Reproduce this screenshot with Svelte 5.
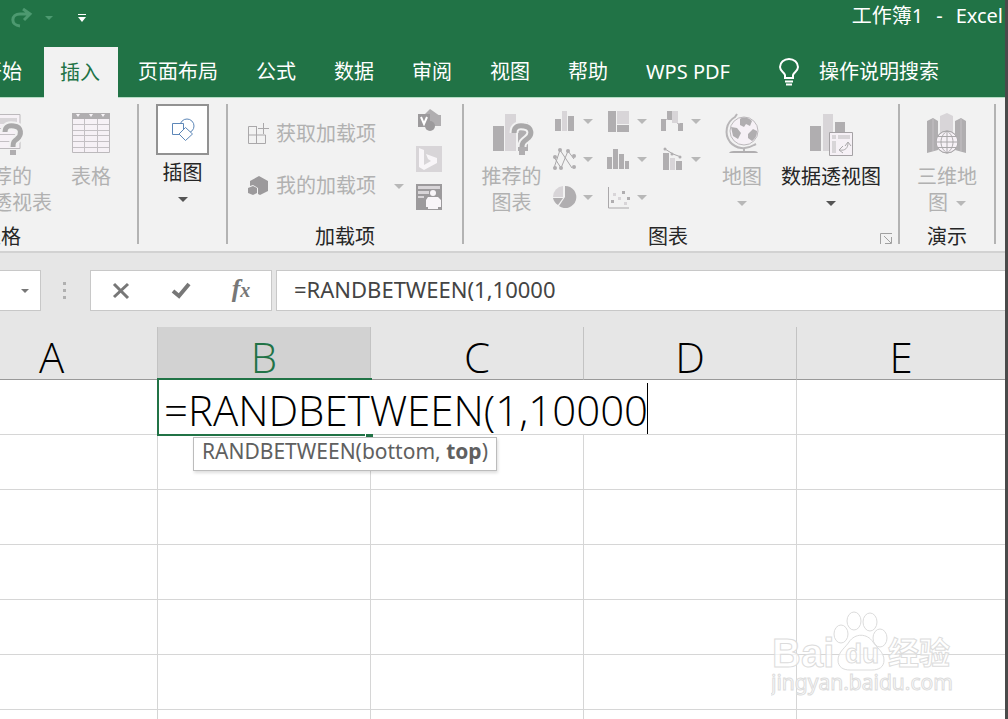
<script>
  const formula = '=RANDBETWEEN(1,10000';
  const tabs = ['开始', '插入', '页面布局', '公式', '数据', '审阅', '视图', '帮助', 'WPS PDF'];
  const columns = ['A', 'B', 'C', 'D', 'E'];
  const emptyRows = [2, 3, 4, 5, 6, 7];
  const charts = [
    ['column', '柱形图'], ['tree', '层次结构图表'], ['waterfall', '瀑布图'],
    ['line', '折线图'], ['histogram', '统计图表'], ['combo', '组合图'],
    ['pie', '饼图'], ['scatter', '散点图']
  ];
  let cellText = $state(formula);
</script>

{#snippet arrow(dark)}
  <svg class="arrow" class:dark width="10" height="5" viewBox="0 0 10 5" aria-hidden="true"><path d="M0 0h10L5 5z" /></svg>
{/snippet}

{#snippet chartIcon(kind)}
  <svg width="24" height="24" viewBox="0 0 24 24" aria-hidden="true">
    {#if kind === 'column'}
      <path class="m" d="M2 10h6v12H2zM15 7h6v15h-6z" /><path class="l" d="M9 2h5v20H9z" />
    {:else if kind === 'tree'}
      <path class="m" d="M1 2h8v21H1zM10 16h12v7H10z" /><path class="l" d="M10 2h12v13H10z" />
    {:else if kind === 'waterfall'}
      <path class="m" d="M0 10h5v12H0zM6 2h5v9H6zM17 14h5v8h-5z" /><path class="l" d="M11 2h6v12h-6z" /><path class="s" d="M5 10.500h2M16 14.500h3" />
    {:else if kind === 'line'}
      <path class="s w" d="M1 21L7 3l12 18M1 10l7 11L15 4l6 8" />
      <g class="m"><circle cx="2" cy="10" r="2" /><circle cx="2" cy="21" r="2" /><circle cx="7" cy="3" r="2" /><circle cx="8" cy="21" r="2" /><circle cx="15" cy="4" r="2" /><circle cx="21" cy="9" r="2" /><circle cx="21" cy="20" r="2" /></g>
    {:else if kind === 'histogram'}
      <path class="m" d="M0 10h5v12H0zM6 2h5v20H6zM12 7h5v15h-5zM18 14h4v8h-4z" />
    {:else if kind === 'combo'}
      <path class="m" d="M2 6h6v17H2zM15 14h6v9h-6z" /><path class="l" d="M9 11h5v12H9z" /><path class="s w" d="M4 2l8 5 8 3" />
      <g class="m"><circle cx="4" cy="2" r="1.500" /><circle cx="11" cy="7" r="1.500" /><circle cx="19" cy="10" r="1.500" /></g>
    {:else if kind === 'pie'}
      <path class="m" d="M12 1a11 11 0 1 1-6 20l6-9z" /><path class="l" d="M10 1v11H0A11 11 0 0 1 10 1z" /><path class="m" d="M0 13h10l-5 7a11 11 0 0 1-5-7z" />
    {:else}
      <path class="s w" d="M1.500 2v21H22" /><path class="m" d="M15 6h3v3h-3zM4 15h3v3H4zM20 12h3v3h-3z" /><path class="l" d="M6 8h3v3H6zM11 12h3v3h-3zM17 17h3v3h-3z" />
    {/if}
  </svg>
{/snippet}

<div class="app">
  <header>
    <div class="title">
      <button class="plain redo" aria-label="重做"><svg width="22" height="20" viewBox="0 0 22 20"><path d="M9 18C-1 17 0 6 9 6h9M12 1l7 5-6 6" /></svg></button>
      <button class="plain redo-menu" aria-label="重做选项"><svg width="8" height="4" viewBox="0 0 8 4"><path d="M0 0h8L4 4z" /></svg></button>
      <button class="plain customize" aria-label="自定义快速访问工具栏"><svg width="8" height="8" viewBox="0 0 8 8"><path d="M0 0h8v1H0zM0 3h8L4 8z" /></svg></button>
      <div class="name"><span>工作簿1</span><span>-</span><span>Excel</span></div>
    </div>
    <nav>
      {#each tabs as tab}
        <button class="tab" class:active={tab === '插入'}>{tab}</button>
      {/each}
      <button class="tab tell">
        <svg width="20" height="28" viewBox="0 0 20 28" aria-hidden="true"><path d="M6 20v-3C5 14 1 13 1 9a9 8 0 0 1 18 0c0 4-4 5-5 8v3zM6 23.500h8M7 26.500h6" /></svg>
        操作说明搜索
      </button>
    </nav>
  </header>

  <div class="ribbon">
    <section class="group tables">
      <div class="body">
        <button class="big pivot" disabled>
          <svg width="48" height="44" viewBox="0 0 48 44" aria-hidden="true">
            <path class="paper" d="M1 2.500h41v34H1z" /><path class="l" d="M20 6h19v6H20z" /><path class="s" d="M16 3v33M2 16.500h39M2 22.500h39M2 29.500h39" />
            <path class="qh" d="M27 20c0-6 5-7 9-6 8 1 8 9 3 13-3 2-4 3-4 8" /><path class="q" d="M27 20c0-6 5-7 9-6 8 1 8 9 3 13-3 2-4 3-4 8" /><path class="m" d="M32 38h6v5h-6z" />
          </svg>
          <span>推荐的</span><span>数据透视表</span>
        </button>
        <button class="big table" disabled>
          <svg width="40" height="44" viewBox="0 0 40 44" aria-hidden="true">
            <path class="paper" d="M1.500 2.500h37v38h-37z" /><path class="m" d="M1 1h38v6H1z" /><path class="white" d="M5 2h4l-2 3zM18 2h4l-2 3zM30 2h4l-2 3z" /><path class="s" d="M2 12.500h36M2 18.500h36M2 23.500h36M2 29.500h36M2 35.500h36M13.500 7v33M26.500 7v33" />
          </svg>
          <span>表格</span>
        </button>
      </div>
      <h2>表格</h2>
    </section>
    <i class="sep"></i>

    <section class="group illus">
      <button class="big illustration">
        <span class="tile"><svg width="26" height="26" viewBox="0 0 26 26" aria-hidden="true"><circle cx="17" cy="9" r="7" /><path class="face" d="M2.500 6.500h11v11h-11z" /><path class="face" d="M15.500 10.500l7 6.500-7 6.500L9 17z" /></svg></span>
        <span>插图</span>
        <span class="drop">{@render arrow(true)}</span>
      </button>
    </section>
    <i class="sep"></i>

    <section class="group addins">
      <div class="body">
        <div class="links">
          <button class="link" disabled>
            <svg width="22" height="24" viewBox="0 0 22 24" aria-hidden="true"><path class="s w" d="M10 4.500H1.500v17h17V13M1.500 13h17M9.500 4.500v17M16.500 1v11M11 6.500h11" /></svg>
            获取加载项
          </button>
          <button class="link" disabled>
            <svg width="22" height="24" viewBox="0 0 22 24" aria-hidden="true"><path class="k" d="M12 2l9 5v10l-8 4-2-1v-6l-5-3-3 1V7z" /><path class="k" d="M6 12l4 2v5l-4 2-5-2v-5z" /></svg>
            我的加载项
            {@render arrow(false)}
          </button>
        </div>
        <div class="stack">
          <button class="plain" aria-label="Visio Data Visualizer" disabled><svg width="26" height="26" viewBox="0 0 26 26"><path class="m" d="M14 1l10 7-10 8-7-8z" /><path class="m" d="M16 7h9v11h-9z" /><circle class="k" cx="14" cy="18" r="5" /><path class="k" d="M2 6h12v13H2z" /><path class="v" d="M5 9l3 7 3-7" /></svg></button>
          <button class="plain" aria-label="必应地图" disabled><svg width="26" height="26" viewBox="0 0 26 26"><path class="l" d="M0 0h26v26H0z" /><path class="white" d="M3 2l5 2v15l7-4-3-2-2-5 11 4v5L8 24l-5-3z" /></svg></button>
          <button class="plain" aria-label="人员图" disabled><svg width="26" height="26" viewBox="0 0 26 26"><path class="k" d="M0 0h26v26H0z" /><path class="l" d="M2 2h22v3H2zM2 7h11v3H2zM2 12h6v2H2z" /><g class="white"><circle cx="17" cy="9" r="3" /><path d="M12 13h10l3 3v7h-3v2H12v-2h-2v-7z" /></g></svg></button>
        </div>
      </div>
      <h2>加载项</h2>
    </section>
    <i class="sep"></i>

    <section class="group charts">
      <div class="body">
        <button class="big recommended" disabled>
          <svg width="44" height="44" viewBox="0 0 44 44" aria-hidden="true">
            <path class="m" d="M3 14h11v25H3zM28 10h10v29H28z" /><path class="l" d="M15 2h11v37H15z" />
            <path class="qh" d="M24 21c0-7 5-8 10-7 8 1 9 9 3 13-4 3-5 4-5 8" /><path class="q" d="M24 21c0-7 5-8 10-7 8 1 9 9 3 13-4 3-5 4-5 8" /><path class="m" d="M29 38h6v5h-6z" />
          </svg>
          <span>推荐的</span><span>图表</span>
        </button>
        <div class="chart-grid">
          {#each charts as [kind, label]}
            <button class="plain small" aria-label={label} disabled>{@render chartIcon(kind)}{@render arrow(false)}</button>
          {/each}
        </div>
        <button class="big map" disabled>
          <svg width="40" height="44" viewBox="0 0 40 44" aria-hidden="true">
            <circle class="paper" cx="22" cy="19" r="14" /><path class="m" d="M18 7c4-3 9-1 12 2l-2 5-4-2-2 3-4-2zM9 15l6 1 4 5-3 6-5-3zM26 22l5-5 4 2c0 5-2 8-5 10l-4-3z" /><path class="ring" d="M15 2l-2 3C4 10 2 22 8 30c6 7 16 8 24 3l2-1M22 36v4" /><path class="m" d="M7 41c1-2 4-2 7-2h16c3 0 5 0 6 2z" />
          </svg>
          <span>地图</span>
          <span class="drop">{@render arrow(false)}</span>
        </button>
        <button class="big pivot-chart">
          <svg width="44" height="44" viewBox="0 0 44 44" aria-hidden="true">
            <path class="m" d="M1 14h11v25H1zM26 10h10v12H26z" /><path class="l" d="M14 2h10v37H14z" /><path class="paper strong" d="M20.500 20.500h23v23h-23z" /><path class="l" d="M23 23h4v4h-4zM29 23h12v4H29zM23 29h4v12h-4z" /><path class="s w" d="M31 38c5 1 8-2 8-7M36 34l3-4 3 4M34 34l-4 4 4 3" />
          </svg>
          <span>数据透视图</span>
          <span class="drop">{@render arrow(true)}</span>
        </button>
      </div>
      <h2>图表</h2>
      <button class="plain launcher" aria-label="图表选项"><svg width="13" height="13" viewBox="0 0 13 13"><path d="M.5 12V1.500H12M4 4l7 7M11.500 5v6.500H5" /></svg></button>
    </section>
    <i class="sep"></i>

    <section class="group demo">
      <div class="body">
        <button class="big" disabled>
          <svg width="40" height="44" viewBox="0 0 40 44" aria-hidden="true">
            <path class="m" d="M0 9l6-3 5 3v29l-11 3zM28 9l6-3 5 3v32l-11-3z" /><path class="l" d="M13 4l7-3 6 3v34H13z" /><path class="s" d="M6 7v32M34 7v32" /><circle class="paper" cx="20" cy="30" r="11" /><path class="s w" d="M9 30h22M11 24.500h18M11 35.500h18M20 19v22M20 19c-8 5-8 17 0 22M20 19c8 5 8 17 0 22" /><circle class="s w" cx="20" cy="30" r="11" />
          </svg>
          <span>三维地</span><span class="inline">图 {@render arrow(false)}</span>
        </button>
      </div>
      <h2>演示</h2>
    </section>
    <i class="sep"></i>
  </div>

  <div class="formula-bar">
    <button class="box name-box" aria-label="名称框"><svg width="8" height="4" viewBox="0 0 8 4"><path d="M0 0h8L4 4z" /></svg></button>
    <svg class="dots" width="4" height="18" viewBox="0 0 4 18" aria-hidden="true"><path d="M0 0h3v3H0zM0 7h3v3H0zM0 14h3v3H0z" /></svg>
    <div class="box actions">
      <button class="plain" aria-label="取消"><svg width="18" height="18" viewBox="0 0 18 18"><path d="M2 2l14 14M16 2L2 15" /></svg></button>
      <button class="plain" aria-label="输入"><svg width="20" height="18" viewBox="0 0 20 18"><path class="thick" d="M2 9l6 5L18 2" /></svg></button>
      <button class="plain fx" aria-label="插入函数">f<small>x</small></button>
    </div>
    <input class="box" aria-label="编辑栏" bind:value={cellText} />
  </div>

  <main>
    <table>
      <colgroup><col class="first" /><col class="std" /><col class="std" /><col class="std" /><col /></colgroup>
      <thead>
        <tr>{#each columns as c}<th scope="col" class:current={c === 'B'}>{c}</th>{/each}</tr>
      </thead>
      <tbody>
        <tr>
          <td></td>
          <td class="editing">
            <input class="editor" aria-label="B1" bind:value={cellText} />
            <i class="caret"></i>
            <i class="selection"></i>
            <div class="hint" role="tooltip">RANDBETWEEN(bottom, <b>top</b>)</div>
          </td>
          <td></td><td></td><td></td>
        </tr>
        {#each emptyRows as r (r)}
          <tr>{#each columns as c}<td></td>{/each}</tr>
        {/each}
      </tbody>
    </table>
    <svg class="watermark" width="182" height="90" viewBox="0 0 182 90" role="img" aria-label="Baidu 经验 jingyan.baidu.com">
      <text x="1" y="57" class="latin">Bai</text>
      <ellipse cx="70" cy="24" rx="7" ry="9" /><ellipse cx="83" cy="11" rx="7" ry="9" /><ellipse cx="99" cy="12" rx="7" ry="9" /><ellipse cx="109" cy="28" rx="7" ry="9" />
      <path d="M78 32c6-9 18-9 24 0 3 5 11 10 11 18 0 7-5 10-12 10H79c-7 0-12-3-12-10 0-8 8-13 11-18z" />
      <text x="74" y="53" class="du">du</text>
      <text x="117" y="54" class="han">经验</text>
      <text x="0" y="80" class="url">jingyan.baidu.com</text>
    </svg>
  </main>
</div>

<style>
  :global(body) { margin: 0; }
  * { box-sizing: border-box; }
  .app {
    display: flex; flex-direction: column; height: 100vh; overflow: hidden;
    border-right: 3px solid #4a4a4a; background: #e6e6e6; color: #262626;
    font: 20px/26px "Noto Sans", "Noto Sans CJK SC", sans-serif;
  }
  button, input { font: inherit; color: inherit; margin: 0; border-radius: 0; }
  button { border: 0; background: none; padding: 0; }
  .plain { display: flex; align-items: center; justify-content: center; }
  h2 { margin: 0; font-size: 20px; font-weight: 400; line-height: 26px; text-align: center; }

  header { background: #217346; color: #fff; }
  .title { display: flex; align-items: center; height: 47px; padding: 0 2px 12px 11px; }
  .title .name { display: flex; gap: 13px; margin-left: auto; padding-bottom: 4px; white-space: nowrap; }
  .redo svg { fill: none; stroke: #4d9970; stroke-width: 3; }
  .redo-menu { margin-left: 12px; }
  .redo-menu svg { fill: #4d9970; }
  .customize { margin-left: 25px; }
  .customize svg { fill: #fff; }
  nav { display: flex; margin-left: -37px; height: 50px; }
  .tab { flex: none; padding: 0 16px; margin: 0 3px; white-space: nowrap; }
  .tab.active { background: #f2f2f2; color: #217346; position: relative; margin: 0 1px 0 3px; padding-right: 18px; z-index: 1; height: 51px; }
  .tell { display: flex; align-items: center; gap: 20px; margin-left: 14px; }
  .tell svg { fill: none; stroke: #fff; stroke-width: 2; }

  .ribbon {
    display: flex; flex: none; height: 156px; padding-top: 6px; padding-right: 10px;
    border-top: 1px solid #b5dcc4; border-bottom: 2px solid #d2d2d2; background: #f2f2f2;
  }
  .sep { flex: none; width: 2px; height: 140px; background: #b3b3b3; }
  .group { flex: none; display: flex; flex-direction: column; position: relative; height: 146px; }
  .body { display: flex; flex: 1; align-items: flex-start; }
  .tables { width: 272px; margin-left: -135px; }
  .tables .body { padding-left: 83px; }
  .illus { width: 87px; }
  .addins { width: 234px; }
  .charts { width: 434px; }
  .charts h2 { padding-right: 26px; }
  .demo { width: 94px; }
  .big { display: flex; flex-direction: column; align-items: center; padding-top: 8px; white-space: nowrap; }
  .big > svg { margin-bottom: 8px; }
  button:disabled { color: #b1b1b1; }
  .pivot { width: 108px; }
  .table { width: 70px; }
  .recommended { width: 95px; }
  .recommended + .chart-grid { margin-left: -6px; }
  .map { width: 54px; }
  .pivot-chart { width: 124px; }
  .demo .big { width: 94px; }
  .drop { display: flex; align-items: center; height: 26px; }
  .inline { display: flex; align-items: center; gap: 8px; }
  .arrow { flex: none; fill: #b8b8b8; }
  .arrow.dark { fill: #555; }
  .illustration { padding: 0; }
  .tile { display: flex; align-items: center; justify-content: center; width: 53px; height: 51px; margin-bottom: 5px; border: 2px solid #929292; background: #fff; }
  .tile svg { fill: none; stroke: #5d87b8; }
  .tile .face { fill: #fff; }

  .links { display: flex; flex-direction: column; gap: 26px; padding: 17px 0 0 19px; width: 188px; }
  .link { display: flex; align-items: center; white-space: nowrap; gap: 7px; }
  .link .arrow { margin-left: 11px; }
  .stack { display: grid; grid-auto-rows: 34px; gap: 4px; }
  .chart-grid { display: grid; grid-template-columns: repeat(3, 54px); grid-auto-rows: 34px; row-gap: 4px; }
  .small { justify-content: flex-start; gap: 6px; }
  .launcher { position: absolute; right: 5px; bottom: 5px; }
  .launcher svg { fill: none; stroke: #a0a0a0; }

  .m { fill: #b0aeb0; }
  .l { fill: #d8d5d8; }
  .k { fill: #9c9a9c; }
  .white { fill: #f8f5f8; }
  .s { fill: none; stroke: #c4c0c4; }
  .s.w { stroke: #aaa8aa; }
  .paper { fill: #f6f1f6; stroke: #bcb9bc; }
  .paper.strong { stroke: #a5a2a5; }
  .q { fill: none; stroke: #aaa9aa; stroke-width: 5; }
  .qh { fill: none; stroke: #f2f2f2; stroke-width: 9; }
  .v { fill: none; stroke: #fff; stroke-width: 2; }
  .ring { fill: none; stroke: #b8b6b8; stroke-width: 2; }

  .formula-bar { display: flex; flex: none; height: 74px; padding: 17px 0 15px; align-items: stretch; }
  .box { border: 1px solid #c8c8c8; background: #fff; height: 41px; }
  .name-box { display: flex; flex: none; align-items: center; justify-content: flex-end; width: 41px; border-left: 0; padding-right: 11px; }
  .name-box svg { fill: #777; }
  .dots { margin: 12px 23px 0 22px; fill: #b0b0b0; flex: none; }
  .actions { display: grid; grid-template-columns: repeat(3, 60px); flex: none; width: 182px; margin-right: 4px; }
  .actions svg { fill: none; stroke: #777; stroke-width: 3; }
  .actions .thick { stroke-width: 4; }
  .fx { font: italic bold 26px/28px "Liberation Serif", serif; color: #777; align-items: baseline; padding-top: 4px; }
  .fx small { font-size: 20px; }
  input.box { flex: 1; min-width: 0; border-right: 0; padding: 0 17px 4px; outline: 0; color: #444; font-size: 22px; }

  main { position: relative; flex: 1; min-height: 0; overflow: hidden; background: #fff; }
  table { width: 100%; table-layout: fixed; border-collapse: separate; border-spacing: 0; }
  .first { width: 158px; }
  .std { width: 213px; }
  th {
    height: 53px; padding: 8px 0 0; background: #e6e6e6; border-right: 1px solid #c3c3c3; border-bottom: 1px solid #999;
    color: #000; font: 300 42px/44px "Open Sans", sans-serif;
  }
  th:first-child { padding-right: 54px; }
  th.current { background: #d2d2d2; color: #217346; }
  td { height: 55px; padding: 0; border-right: 1px solid #d6d6d6; border-bottom: 1px solid #d6d6d6; }
  th:last-child, td:last-child { border-right: 0; }
  .editing { position: relative; }
  .editor {
    position: absolute; left: 0; top: 0; width: 496px; height: 54px; padding: 4px 0 0 6px;
    border: 0; outline: 0; background: #fff; color: #000; font: 300 42px/50px "Open Sans", sans-serif;
  }
  .caret { position: absolute; left: 489px; top: 3px; width: 1px; height: 51px; background: #000; }
  .selection { position: absolute; left: -1px; top: -2px; width: 215px; height: 58px; border: 2px solid #217346; border-right: 0; }
  .selection::after { content: ""; position: absolute; right: -1px; bottom: -3px; width: 7px; height: 3px; background: #217346; border-left: 1px solid #fff; }
  .hint {
    position: absolute; left: 35px; top: 57px; height: 34px; padding: 0 8px; white-space: nowrap;
    border: 1px solid #bcbcbc; background: #fff; color: #606060; font-size: 21px; line-height: 26px; box-shadow: 1px 2px 3px #0002;
  }
  .watermark { position: absolute; right: 52px; bottom: 19px; fill: #ffffffb0; stroke: #dcdcdc; }
  .latin { font: bold 40px "Liberation Sans", sans-serif; }
  .du { font: bold 28px "Liberation Sans", sans-serif; }
  .han { font: bold 31px "Noto Sans CJK SC", sans-serif; }
  .url { font: 21px "Noto Sans", sans-serif; }
</style>
